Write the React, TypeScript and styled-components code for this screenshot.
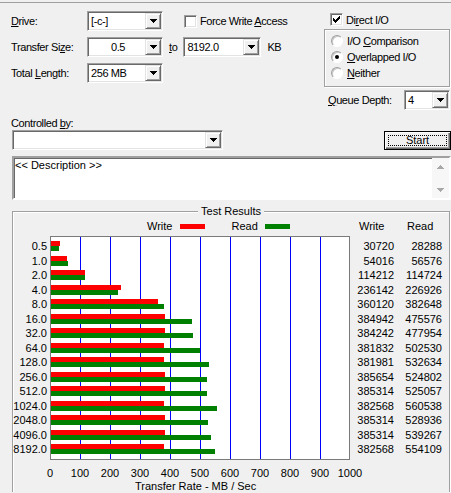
import React from "react";
import styled, { createGlobalStyle } from "styled-components";

const sizes = ["0.5", "1.0", "2.0", "4.0", "8.0", "16.0", "32.0", "64.0", "128.0", "256.0", "512.0", "1024.0", "2048.0", "4096.0", "8192.0"];
const writes = [30720, 54016, 114212, 236142, 360120, 384942, 384242, 381832, 381981, 385654, 385314, 382568, 385314, 385314, 382568];
const reads = [28288, 56576, 114724, 226926, 382648, 475576, 477954, 502530, 532634, 524802, 525057, 560538, 528936, 539267, 554109];
const ticks = [0, 100, 200, 300, 400, 500, 600, 700, 800, 900, 1000];

// 1000 MB/s spans the 300px plot
const barWidth = (v: number) => Math.round((v * 0.3) / 1012);

const GlobalStyle = createGlobalStyle`
  * { box-sizing: border-box; }
  html, body { margin: 0; padding: 0; background: #f0f0f0; }
  body {
    font-family: "Liberation Sans", Arial, sans-serif;
    font-size: 11px;
    color: #000;
  }
`;

const DownArrow = ({ color = "#000" }: { color?: string }) => (
  <svg width="7" height="4" viewBox="0 0 7 4">
    <path d="M0 0h7v1h-1v1h-1v1h-1v1h-1v-1h-1v-1h-1v-1h-1z" fill={color} />
  </svg>
);

const UpArrow = ({ color = "#000" }: { color?: string }) => (
  <svg width="7" height="4" viewBox="0 0 7 4">
    <path d="M0 4h7v-1h-1v-1h-1v-1h-1v-1h-1v1h-1v1h-1v1h-1z" fill={color} />
  </svg>
);

const Tick = () => (
  <svg width="7" height="7" viewBox="0 0 7 7">
    {[2, 3, 4, 3, 2, 1, 0].map((y, i) => (
      <rect key={i} x={i} y={y} width="1" height="3" fill="#000" />
    ))}
  </svg>
);

const Window = styled.div`
  width: 451px;
  height: 490px;
  margin-top: 2px;
  border-top: 1px solid #a0a0a0;
  padding-left: 11px;
  overflow: hidden;
  letter-spacing: -0.4px;
`;

const TopSection = styled.div`
  display: flex;
  height: 107px;
`;

const LeftPane = styled.div`
  width: 313px;
  padding-top: 8px;
  display: flex;
  flex-direction: column;
  gap: 6px;
`;

const FieldRow = styled.div`
  display: flex;
  align-items: center;
  height: 20px;
`;

const FieldLabel = styled.div`
  width: 76px;
  white-space: nowrap;
`;

const Combo = styled.div<{ $w: number; $ml?: number }>`
  width: ${(p) => p.$w}px;
  height: 20px;
  margin-left: ${(p) => p.$ml ?? 0}px;
  display: flex;
  background: #fff;
  padding: 1px;
  border: 1px solid;
  border-color: #a0a0a0 #fff #fff #a0a0a0;
  box-shadow: inset 1px 1px 0 #696969, inset -1px -1px 0 #e3e3e3;
  flex-shrink: 0;
`;

const ComboText = styled.div<{ $center?: boolean }>`
  flex: 1;
  line-height: 16px;
  padding-left: 2px;
  text-align: ${(p) => (p.$center ? "center" : "left")};
  white-space: nowrap;
  overflow: hidden;
`;

const ArrowButton = styled.div`
  width: 16px;
  height: 16px;
  display: flex;
  align-items: center;
  justify-content: center;
  background: #f0f0f0;
  border: 1px solid;
  border-color: #e3e3e3 #696969 #696969 #e3e3e3;
  box-shadow: inset 1px 1px 0 #fff, inset -1px -1px 0 #a0a0a0;
`;

const Inline = styled.span<{ $ml?: number }>`
  margin-left: ${(p) => p.$ml ?? 0}px;
  white-space: nowrap;
`;

const CheckRow = styled.label<{ $ml?: number }>`
  display: flex;
  align-items: center;
  gap: 3px;
  height: 13px;
  margin-left: ${(p) => p.$ml ?? 0}px;
  white-space: nowrap;
`;

const CheckBox = styled.span`
  width: 13px;
  height: 13px;
  display: flex;
  align-items: center;
  justify-content: center;
  background: #fff;
  border: 1px solid;
  border-color: #a0a0a0 #fff #fff #a0a0a0;
  box-shadow: inset 1px 1px 0 #696969, inset -1px -1px 0 #e3e3e3;
`;

const RightPane = styled.div`
  width: 126px;
  padding-top: 10px;
`;

const RadioGroup = styled.div`
  margin-top: 3px;
  height: 58px;
  padding: 3px 0 0 6px;
  border: 1px solid #a0a0a0;
  box-shadow: inset 1px 1px 0 #fff, 1px 1px 0 #fff;
`;

const RadioRow = styled.label`
  display: flex;
  align-items: center;
  gap: 4px;
  height: 16px;
  white-space: nowrap;
`;

const Radio = styled.span<{ $on?: boolean }>`
  width: 12px;
  height: 12px;
  border-radius: 50%;
  display: flex;
  align-items: center;
  justify-content: center;
  background: #fff;
  border: 1px solid;
  border-color: #a0a0a0 #fff #fff #a0a0a0;
  box-shadow: inset 1px 1px 0 #c8c8c8;

  &::after {
    content: "";
    display: ${(p) => (p.$on ? "block" : "none")};
    width: 4px;
    height: 4px;
    border-radius: 50%;
    background: #000;
  }
`;

const QueueRow = styled.div`
  margin-top: 3px;
  height: 20px;
  display: flex;
  align-items: center;
  justify-content: space-between;
  padding-left: 4px;
`;

const SectionLabel = styled.div`
  margin-top: 7px;
  line-height: 13px;
`;

const ControlRow = styled.div`
  display: flex;
  align-items: flex-start;
  justify-content: space-between;
  padding-left: 1px;
`;

const StartButton = styled.button`
  margin-top: 1px;
  width: 67px;
  height: 19px;
  padding: 0;
  font: inherit;
  letter-spacing: 0;
  color: #000;
  background: #f0f0f0;
  border: 1px solid #000;
  box-shadow: inset 1px 1px 0 #fff, inset -1px -1px 0 #696969, inset -2px -2px 0 #a0a0a0;
  display: flex;
  align-items: center;
  justify-content: center;
`;

const FocusRing = styled.span`
  width: 59px;
  height: 11px;
  border: 1px dotted #000;
  display: flex;
  align-items: center;
  justify-content: center;
  line-height: 11px;
`;

const Description = styled.div`
  margin: 6px 0 0 1px;
  width: 439px;
  height: 44px;
  display: flex;
  background: #fff;
  border: 2px solid;
  border-color: #a0a0a0 #fff #fff #a0a0a0;
  box-shadow: inset 1px 1px 0 #696969;
  letter-spacing: 0;
`;

const DescText = styled.div`
  flex: 1;
  padding: 1px 0 0 1px;
  line-height: 13px;
`;

const ScrollBar = styled.div`
  width: 17px;
  display: flex;
  flex-direction: column;
  justify-content: space-between;
  background: #f7f7f7;
`;

const ScrollArrow = styled.div`
  height: 17px;
  display: flex;
  align-items: center;
  justify-content: center;
`;

const GroupBox = styled.div`
  margin: 11px 0 0 1px;
  width: 438px;
  height: 300px;
  border: 1px solid #a0a0a0;
  box-shadow: inset 1px 1px 0 #fff, 1px 1px 0 #fff;
  letter-spacing: 0;
`;

const GroupTitle = styled.div`
  width: fit-content;
  margin: -7px auto 0;
  padding: 0 3px;
  background: #f0f0f0;
  line-height: 13px;
`;

const HeaderRow = styled.div`
  margin-top: 2px;
  display: flex;
  align-items: center;
  line-height: 13px;
`;

const Legend = styled.div`
  width: 337px;
  padding-left: 134px;
  display: flex;
  align-items: center;
`;

const Swatch = styled.span<{ $color: string; $ml: number }>`
  width: 25px;
  height: 5px;
  margin-left: ${(p) => p.$ml}px;
  background: ${(p) => p.$color};
`;

const HeaderCell = styled.div<{ $w: number; $pl: number }>`
  width: ${(p) => p.$w}px;
  padding-left: ${(p) => p.$pl}px;
`;

const ChartRow = styled.div`
  margin-top: 3px;
  display: flex;
  align-items: flex-start;
`;

const TextColumn = styled.div<{ $w: number; $mr?: number }>`
  width: ${(p) => p.$w}px;
  margin-right: ${(p) => p.$mr ?? 0}px;
  padding-top: 5px;
  text-align: right;
`;

const Cell = styled.div`
  height: 14.5px;
  line-height: 11px;
  white-space: nowrap;
`;

const Plot = styled.div`
  width: 300px;
  padding-top: 4px;
  border: 1px solid #7a7a7a;
  background: #fff repeating-linear-gradient(to right, transparent 0 29px, #0000ff 29px 30px);
`;

const BarRow = styled.div`
  height: 14.5px;
`;

const Bar = styled.div<{ $color: string }>`
  height: 5px;
  background: ${(p) => p.$color};
`;

const AxisRow = styled.div`
  margin-top: 7px;
  padding-left: 22px;
  display: flex;
  line-height: 13px;
`;

const AxisTick = styled.div`
  width: 30px;
  text-align: center;
`;

const AxisTitle = styled.div`
  padding-left: 122px;
  line-height: 13px;
`;

export default function App() {
  return (
    <>
      <GlobalStyle />
      <Window>
        <TopSection>
          <LeftPane>
            <FieldRow>
              <FieldLabel>
                <u>D</u>rive:
              </FieldLabel>
              <Combo $w={76}>
                <ComboText>[-c-]</ComboText>
                <ArrowButton>
                  <DownArrow />
                </ArrowButton>
              </Combo>
              <CheckRow $ml={21}>
                <CheckBox />
                <span>
                  Force Write <u>A</u>ccess
                </span>
              </CheckRow>
            </FieldRow>
            <FieldRow>
              <FieldLabel>
                Transfer Si<u>z</u>e:
              </FieldLabel>
              <Combo $w={76}>
                <ComboText $center>0.5</ComboText>
                <ArrowButton>
                  <DownArrow />
                </ArrowButton>
              </Combo>
              <Inline $ml={6}>
                <u>t</u>o
              </Inline>
              <Combo $w={78} $ml={6}>
                <ComboText>8192.0</ComboText>
                <ArrowButton>
                  <DownArrow />
                </ArrowButton>
              </Combo>
              <Inline $ml={6}>KB</Inline>
            </FieldRow>
            <FieldRow>
              <FieldLabel>
                Total <u>L</u>ength:
              </FieldLabel>
              <Combo $w={76}>
                <ComboText>256 MB</ComboText>
                <ArrowButton>
                  <DownArrow />
                </ArrowButton>
              </Combo>
            </FieldRow>
          </LeftPane>
          <RightPane>
            <CheckRow $ml={6}>
              <CheckBox>
                <Tick />
              </CheckBox>
              <span>
                Di<u>r</u>ect I/O
              </span>
            </CheckRow>
            <RadioGroup>
              <RadioRow>
                <Radio />
                <span>
                  I/O <u>C</u>omparison
                </span>
              </RadioRow>
              <RadioRow>
                <Radio $on />
                <span>
                  <u>O</u>verlapped I/O
                </span>
              </RadioRow>
              <RadioRow>
                <Radio />
                <span>
                  <u>N</u>either
                </span>
              </RadioRow>
            </RadioGroup>
            <QueueRow>
              <span>
                <u>Q</u>ueue Depth:
              </span>
              <Combo $w={46}>
                <ComboText>4</ComboText>
                <ArrowButton>
                  <DownArrow />
                </ArrowButton>
              </Combo>
            </QueueRow>
          </RightPane>
        </TopSection>

        <SectionLabel>
          Controlled <u>b</u>y:
        </SectionLabel>
        <ControlRow>
          <Combo $w={211}>
            <ComboText />
            <ArrowButton>
              <DownArrow />
            </ArrowButton>
          </Combo>
          <StartButton>
            <FocusRing>Start</FocusRing>
          </StartButton>
        </ControlRow>

        <Description>
          <DescText>&lt;&lt; Description &gt;&gt;</DescText>
          <ScrollBar>
            <ScrollArrow>
              <UpArrow color="#a8a8a8" />
            </ScrollArrow>
            <ScrollArrow>
              <DownArrow color="#a8a8a8" />
            </ScrollArrow>
          </ScrollBar>
        </Description>

        <GroupBox>
          <GroupTitle>Test Results</GroupTitle>
          <HeaderRow>
            <Legend>
              <span>Write</span>
              <Swatch $color="#ff0000" $ml={8} />
              <Inline $ml={26}>Read</Inline>
              <Swatch $color="#008000" $ml={7} />
            </Legend>
            <HeaderCell $w={44} $pl={9}>
              Write
            </HeaderCell>
            <HeaderCell $w={48} $pl={13}>
              Read
            </HeaderCell>
          </HeaderRow>
          <ChartRow>
            <TextColumn $w={34} $mr={3}>
              {sizes.map((s) => (
                <Cell key={s}>{s}</Cell>
              ))}
            </TextColumn>
            <Plot>
              {sizes.map((s, i) => (
                <BarRow key={s}>
                  <Bar $color="#ff0000" style={{ width: barWidth(writes[i]) }} />
                  <Bar $color="#008000" style={{ width: barWidth(reads[i]) }} />
                </BarRow>
              ))}
            </Plot>
            <TextColumn $w={44}>
              {writes.map((v, i) => (
                <Cell key={i}>{v}</Cell>
              ))}
            </TextColumn>
            <TextColumn $w={48}>
              {reads.map((v, i) => (
                <Cell key={i}>{v}</Cell>
              ))}
            </TextColumn>
          </ChartRow>
          <AxisRow>
            {ticks.map((t) => (
              <AxisTick key={t}>{t}</AxisTick>
            ))}
          </AxisRow>
          <AxisTitle>Transfer Rate - MB / Sec</AxisTitle>
        </GroupBox>
      </Window>
    </>
  );
}
